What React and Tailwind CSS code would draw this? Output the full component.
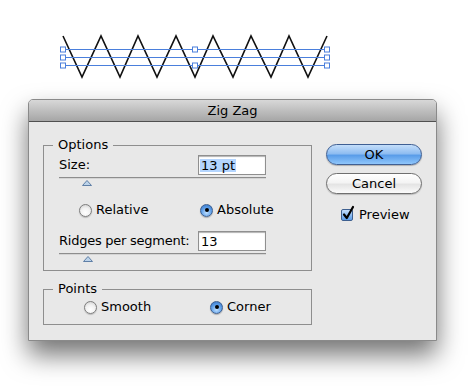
import React from 'react';

const ZIG = [
  [63, 36], [82, 77], [101, 36], [120, 77], [138, 36], [157, 77], [176, 36], [195, 77],
  [213, 36], [233, 77], [251, 36], [271, 77], [289, 36], [308, 77], [327, 36],
];

const HANDLES = [
  [63, 49], [63, 57], [63, 65], [195, 49], [195, 65], [327, 49], [327, 57], [327, 65],
];

function Artwork() {
  return (
    <svg width="470" height="99" className="block">
      <polyline
        points={ZIG.map(p => p.join(',')).join(' ')}
        fill="none"
        stroke="#111"
        strokeWidth="1.6"
        strokeLinejoin="miter"
      />
      {[49, 57, 65].map(y => (
        <line key={y} x1="63" x2="327" y1={y + 0.5} y2={y + 0.5} stroke="#4a7fdc" strokeWidth="1" />
      ))}
      {HANDLES.map(([x, y]) => (
        <rect key={`${x}-${y}`} x={x - 2.5} y={y - 2} width="5" height="5" fill="#fff" stroke="#4a7fdc" strokeWidth="1" />
      ))}
    </svg>
  );
}

function Radio({ checked, label, className = '' }) {
  return (
    <div className={`flex items-center gap-[4px] shrink-0 ${className}`}>
      {checked ? (
        <div className="w-[13px] h-[13px] shrink-0 rounded-full border border-[#3d5f8f] bg-[radial-gradient(circle_at_50%_70%,#bfe0ff_0%,#5a9be6_55%,#2f6fc2_100%)] flex items-center justify-center shadow-[0_1px_1px_rgba(0,0,0,0.25)]">
          <div className="w-[4px] h-[4px] rounded-full bg-black" />
        </div>
      ) : (
        <div className="w-[13px] h-[13px] shrink-0 rounded-full border border-[#7d7d7d] bg-[radial-gradient(circle_at_50%_70%,#ffffff_0%,#f1f1f1_50%,#c9c9c9_100%)] shadow-[0_1px_1px_rgba(0,0,0,0.2)]" />
      )}
      <span className="whitespace-nowrap">{label}</span>
    </div>
  );
}

function Slider({ offset }) {
  return (
    <div className="mt-[2px]">
      <div className="h-[2px] border-t border-[#8d8d8d] bg-[#d4d4d4]" />
      <svg width="10" height="6" className="block mt-[1px]" style={{ marginLeft: offset }}>
        <polygon points="5,0.5 9.5,5.5 0.5,5.5" fill="#bcd3ea" stroke="#5f7fa6" strokeWidth="1" />
      </svg>
    </div>
  );
}

function Field({ children }) {
  return (
    <div className="w-[68px] h-[20px] bg-white border border-[#8f8f8f] shadow-[inset_0_1px_1px_rgba(0,0,0,0.3)] flex items-center pl-[1px] leading-none">
      {children}
    </div>
  );
}

export default function App() {
  return (
    <div className="w-[470px] h-[388px] bg-white overflow-hidden text-black text-[13px] leading-[16px] font-['DejaVu_Sans',sans-serif]">
      <Artwork />

      <div className="ml-[28px] w-[409px] rounded-t-[5px] border border-[#8a8a8a] bg-[#e8e8e8] shadow-[0_14px_26px_rgba(0,0,0,0.55)]">
        {/* Title bar */}
        <div className="h-[22px] rounded-t-[4px] bg-gradient-to-b from-[#d8d8d8] to-[#a6a6a6] border-b border-[#505050] flex items-center justify-center">
          Zig Zag
        </div>

        <div className="flex px-[14px] pt-[15px] pb-[15px]">
          {/* Left column */}
          <div className="w-[269px] shrink-0">
            <fieldset className="min-w-0 border border-[#8e8e8e] pl-[15px] pr-[45px] pb-[8px]">
              <legend className="px-[5px] -ml-[6px]">Options</legend>
              <div className="flex items-center justify-between mt-[2px]">
                <span>Size:</span>
                <Field>
                  <span className="bg-[#b4d5fe] px-[1px]">13 pt</span>
                </Field>
              </div>
              <Slider offset={23} />
              <div className="flex items-center h-[16px] mt-[16px] pl-[20px]">
                <Radio label="Relative" className="w-[121px]" />
                <Radio checked label="Absolute" />
              </div>
              <div className="flex items-center justify-between mt-[13px]">
                <span className="tracking-[-0.25px]">Ridges per segment:</span>
                <Field>
                  <span className="px-[1px]">13</span>
                </Field>
              </div>
              <Slider offset={24} />
            </fieldset>

            <fieldset className="min-w-0 mt-[10px] border border-[#8e8e8e] pl-[15px] pr-[15px] pb-[9px]">
              <legend className="px-[5px] -ml-[6px]">Points</legend>
              <div className="flex items-center h-[16px] mt-[2px] pl-[25px]">
                <Radio label="Smooth" className="w-[126px]" />
                <Radio checked label="Corner" />
              </div>
            </fieldset>
          </div>

          {/* Right column */}
          <div className="ml-[14px] mt-[7px] flex flex-col">
            <button className="w-[96px] h-[21px] rounded-full border border-[#3f5f93] bg-[linear-gradient(to_bottom,#c4defa_0%,#8fbdf1_45%,#5a9de9_55%,#8fc6fb_100%)] shadow-[0_1px_1px_rgba(0,0,0,0.25)] leading-none">
              OK
            </button>
            <button className="w-[96px] h-[21px] mt-[8px] rounded-full border border-[#6f6f6f] bg-[linear-gradient(to_bottom,#ffffff_0%,#f4f4f4_45%,#e4e4e4_55%,#fbfbfb_100%)] shadow-[0_1px_1px_rgba(0,0,0,0.2)] leading-none">
              Cancel
            </button>
            <div className="flex items-center mt-[13px] ml-[15px]">
              <div className="relative w-[12px] h-[12px] rounded-[2px] border border-[#3d5f8f] bg-[linear-gradient(to_bottom,#c4defa,#5a9de9)]">
                <svg width="14" height="16" className="absolute -top-[5px] left-[0px]" viewBox="0 0 14 16">
                  <path d="M2 9.5 L4.8 13 L11 2" fill="none" stroke="#000" strokeWidth="2.2" strokeLinecap="round" strokeLinejoin="round" />
                </svg>
              </div>
              <span className="ml-[6px]">Preview</span>
            </div>
          </div>
        </div>
      </div>
    </div>
  );
}
